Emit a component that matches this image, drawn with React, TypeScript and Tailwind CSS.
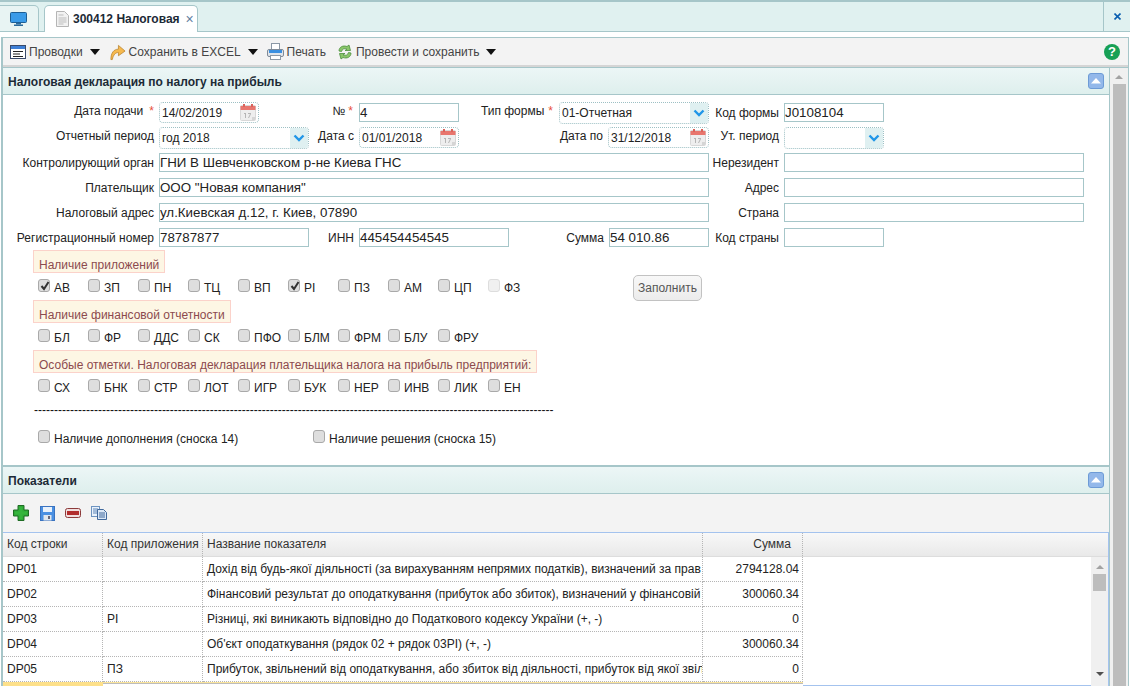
import React from "react";

const Chev = () => (
  <svg width="12" height="8" viewBox="0 0 12 8"><path d="M1.5 1.5 L6 6 L10.5 1.5" fill="none" stroke="#2196e8" strokeWidth="2.4" /></svg>
);

const Cal = () => (
  <svg width="16" height="17" viewBox="0 0 16 17">
    <rect x="0.5" y="1.5" width="15" height="15" rx="1" fill="#eeeeee" stroke="#d8d8d8" />
    <rect x="0.5" y="2" width="15" height="4" fill="#e8766e" />
    <rect x="3" y="0" width="2" height="3" fill="#d9645c" />
    <rect x="11" y="0" width="2" height="3" fill="#d9645c" />
    <path d="M4 9h2v5H5v-4H4zM8 9h3v1l-2 4H8l2-4H8z" fill="#b5b5b5" />
    <path d="M12 13h3v3h-3z" fill="#d5d5d5" />
  </svg>
);

const Label = ({ w, children, starCls, up, gap = 5 }: { w: number; children: React.ReactNode; starCls?: string; up?: boolean; gap?: number }) => (
  <div style={{ width: w + gap, paddingRight: gap }} className={`shrink-0 text-right whitespace-nowrap ${up ? "pb-[3px]" : ""}`}>
    {children}
    {starCls && <span className={`text-[#e8503a] ${starCls}`}>*</span>}
  </div>
);

const Input = ({ w, v }: { w: number; v?: string }) => (
  <div style={{ width: w }} className="h-[19px] shrink-0 border border-[#a6c6c9] text-[13.33px] leading-[17px] text-[#222] whitespace-nowrap overflow-hidden">{v}</div>
);

const DateF = ({ w, v }: { w: number; v: string }) => (
  <div style={{ width: w }} className="h-[21px] shrink-0 border border-dotted border-[#9dc0c4] rounded-[4px] pl-[2px] flex items-center justify-between text-[12px] text-[#222]">
    <span className="pt-[1px]">{v}</span>
    <span className="mr-[2px] flex"><Cal /></span>
  </div>
);

const SelectF = ({ w, v }: { w: number; v?: string }) => (
  <div style={{ width: w }} className="h-[22px] shrink-0 border border-dotted border-[#9dc0c4] rounded-[4px] pl-[2px] flex items-center justify-between text-[12px] text-[#222] overflow-hidden">
    <span className="pt-[1px]">{v}</span>
    <span className="w-[18px] h-full bg-[#dff0f1] flex items-center justify-center"><Chev /></span>
  </div>
);

const Row = ({ children }: { children: React.ReactNode }) => (
  <div className="flex items-center h-[25px] text-[12px] text-[#222]">{children}</div>
);

const Check = ({ checked, disabled, className = "" }: { checked?: boolean; disabled?: boolean; className?: string }) => (
  <span className={`block w-[12px] h-[13px] rounded-[3px] border shrink-0 relative ${disabled ? "border-[#dddddd] bg-[#f0f0f0]" : "border-[#a9a9a9] bg-[#dedede]"} ${className}`}>
    {checked && (
      <svg className="absolute left-[1px] top-[1px]" width="10" height="10" viewBox="0 0 10 10"><path d="M1.5 5 L4 8 L8.5 1" fill="none" stroke="#333" strokeWidth="2" /></svg>
    )}
  </span>
);

const CheckRow = ({ items }: { items: { t: string; c?: boolean; d?: boolean }[] }) => (
  <div className="flex h-[27px] pl-[35px] text-[12px] text-[#222]">
    {items.map((i) => (
      <div key={i.t} className="w-[50px] shrink-0 flex items-start pt-[6px] gap-[4px]">
        <Check checked={i.c} disabled={i.d} />
        <span className="pt-[2px] leading-[14px] whitespace-nowrap">{i.t}</span>
      </div>
    ))}
  </div>
);

const Title = ({ children }: { children: React.ReactNode }) => (
  <div className="ml-[30px] w-fit h-[23px] border border-[#fbd2ca] bg-[#fdf6e4] px-[5px] text-[12px] leading-[14px] pt-[7px] text-[#8c4a4e] whitespace-nowrap">{children}</div>
);

const Collapse = () => (
  <span className="w-[16px] h-[16px] rounded-[3px] border border-[#6d9bd6] bg-[#93b8ea] flex items-center justify-center">
    <svg width="10" height="6" viewBox="0 0 10 6"><path d="M5 0 L10 5.5 H0 Z" fill="#ffffff" /></svg>
  </span>
);

const PanelHead = ({ t }: { t: string }) => (
  <div className="h-[27px] shrink-0 flex items-center justify-between pl-[5px] pr-[5px] bg-gradient-to-b from-[#ecf6f6] to-[#deefed] border-b border-[#a6c6c9] text-[12px] font-bold text-[#1c2a36]">
    <span className="pt-[1px]">{t}</span>
    <Collapse />
  </div>
);

const Caret = () => (
  <svg className="ml-[4px]" width="10" height="6" viewBox="0 0 10 6"><path d="M0 0 H10 L5 6 Z" fill="#111" /></svg>
);

const ToolBtn = ({ icon, t, caret }: { icon: React.ReactNode; t: string; caret?: boolean }) => (
  <div className={`flex items-center h-full gap-[3px] ${caret ? "mr-[9px]" : "mr-[11px]"}`}>
    <span className="flex">{icon}</span>
    <span>{t}</span>
    {caret && <Caret />}
  </div>
);

const IcPost = () => (
  <svg width="16" height="16" viewBox="0 0 16 16">
    <rect x="0.5" y="1.5" width="15" height="13" fill="#fff" stroke="#3a4a6a" />
    <rect x="1" y="2" width="14" height="3" fill="#3f7fd6" />
    <path d="M3 7.5h10M3 10h7M3 12.5h10" stroke="#222" />
  </svg>
);
const IcExcel = () => (
  <svg width="17" height="18" viewBox="0 0 18 18">
    <path d="M2 17 C2 10 5 6 10 6 L10 2 L17 8 L10 13 L10 9.5 C7 9.5 4.5 12 3.5 17 Z" fill="#f6b94e" stroke="#b9822c" strokeWidth="0.8" />
  </svg>
);
const IcPrint = () => (
  <svg width="17" height="17" viewBox="0 0 17 17">
    <rect x="4.5" y="0.5" width="8" height="6" fill="#fff" stroke="#8b98a6" />
    <rect x="0.5" y="6.5" width="16" height="7" rx="1.5" fill="#dfe4ea" stroke="#7f8a97" />
    <rect x="2" y="7" width="13" height="3" fill="#3a8fe0" />
    <rect x="3.5" y="12.5" width="10" height="4" fill="#fff" stroke="#8b98a6" />
  </svg>
);
const IcPost2 = () => (
  <svg width="16" height="16" viewBox="0 0 16 16" fill="none">
    <path d="M2 7 C2 3 6 1 10 2.5 L12 1 L13.5 6.5 L8 6.5 L10 5 C7.5 4 5 5 4.5 7.5 Z" fill="#8ac66a" stroke="#4b8f3d" strokeWidth="0.8" />
    <path d="M14 9 C14 13 10 15 6 13.5 L4 15 L2.5 9.5 L8 9.5 L6 11 C8.5 12 11 11 11.5 8.5 Z" fill="#8ac66a" stroke="#4b8f3d" strokeWidth="0.8" />
  </svg>
);
const IcPlus = () => (
  <svg width="16" height="16" viewBox="0 0 16 16">
    <path d="M5 .5h6v4.500h4.500v6H11v4.500H5V11H.5V5H5z" fill="#2fa836" stroke="#1f6d24" strokeLinejoin="round" />
    <path d="M6.500 2h3v4.500H14v3H9.500V14h-3V9.500H2v-3h4.500z" fill="#35b53c" />
  </svg>
);
const IcSave = () => (
  <svg width="15" height="15" viewBox="0 0 15 15">
    <rect x="0.5" y="0.500" width="14" height="14" fill="#4a90e2" stroke="#3a73c0" />
    <rect x="3" y="1" width="9" height="5" fill="#e8f1fb" />
    <rect x="3.500" y="9" width="8" height="5.500" fill="#dfe6ee" />
    <rect x="8" y="10" width="2" height="3" fill="#667" />
  </svg>
);
const IcMinus = () => (
  <svg width="16" height="10" viewBox="0 0 16 10">
    <rect x="0.5" y="0.500" width="15" height="9" rx="2" fill="#f0dede" stroke="#8c3a3a" />
    <rect x="2" y="3" width="12" height="4" fill="#b22c2c" />
  </svg>
);
const IcCopy = () => (
  <svg width="16" height="14" viewBox="0 0 16 14">
    <rect x="0.5" y="0.500" width="8" height="10" fill="#eaf2fb" stroke="#6d93c0" />
    <path d="M2 3h5M2 5h5M2 7h5" stroke="#5a84b8" />
    <path d="M6.500 3.500h6l3 3v7h-9z" fill="#dbe8f7" stroke="#41699c" />
    <path d="M8 7h6M8 9h6M8 11h6" stroke="#41699c" />
  </svg>
);

const rows = [
  ["DP01", "", "Дохід від будь-якої діяльності (за вирахуванням непрямих податків), визначений за прав", "2794128.04"],
  ["DP02", "", "Фінансовий результат до оподаткування (прибуток або збиток), визначений у фінансовій", "300060.34"],
  ["DP03", "РІ", "Різниці, які виникають відповідно до Податкового кодексу України (+, -)", "0"],
  ["DP04", "", "Об'єкт оподаткування (рядок 02 + рядок 03РІ) (+, -)", "300060.34"],
  ["DP05", "ПЗ", "Прибуток, звільнений від оподаткування, або збиток від діяльності, прибуток від якої звіл", "0"],
];

export default function App() {
  return (
    <div className="w-[1130px] h-[686px] overflow-hidden bg-white flex flex-col font-['Liberation_Sans',Arial,sans-serif] text-[12px] text-[#222]">
      {/* tab bar */}
      <div className="h-[32px] shrink-0 border-t-2 border-b border-[#a6c6c9] bg-[#e0f1f0] flex items-end justify-between">
        <div className="flex items-end gap-[5px] mb-[-1px]">
          <div className="w-[39px] h-[27px] border border-l-0 border-[#a6c6c9] rounded-tr-[5px] bg-[#e8f4f3] flex items-center justify-center pr-[2px]">
            <svg width="17" height="14" viewBox="0 0 17 14">
              <rect x="0.500" y="0.500" width="16" height="10" rx="1" fill="#3a9be8" stroke="#1d5e94" />
              <rect x="6" y="11" width="5" height="1.500" fill="#2a6a9c" />
              <rect x="4" y="12.500" width="9" height="1.500" fill="#2a6a9c" />
            </svg>
          </div>
          <div className="w-[154px] h-[27px] border border-b-0 border-[#a6c6c9] rounded-t-[5px] bg-white flex items-center pl-[11px] gap-[4px] font-bold text-[#1c2a36]">
            <svg width="13" height="16" viewBox="0 0 13 16">
              <path d="M.5.500h8l4 4v11H.5z" fill="#f2f2f2" stroke="#b5b5b5" />
              <path d="M2.500 4h5M2.500 7h8M2.500 9h8M2.500 11h8M2.500 13h5" stroke="#bdbdbd" />
            </svg>
            <span>300412 Налоговая</span>
            <span className="ml-[2px] font-normal text-[#5f7f9f] text-[14px] leading-none">×</span>
          </div>
        </div>
        <div className="w-[27px] h-full border-l border-[#a6c6c9] flex items-center justify-center">
          <svg width="7" height="7" viewBox="0 0 7 7"><path d="M.5.500 L6.500 6.500 M6.500.500 L.5 6.500" stroke="#0b5fb0" strokeWidth="1.600" /></svg>
        </div>
      </div>
      <div className="h-[5px] shrink-0" />
      {/* frame */}
      <div className="flex-1 min-h-0 ml-[1px] mr-[1px] border-l-2 border-r border-t border-[#a6c6c9] flex flex-col">
        <div className="h-[29px] shrink-0 bg-[#f3f3f3] border-b-2 border-[#d5d5d5] flex items-center pl-[7px] pr-[8px] text-[#444]">
          <ToolBtn icon={<IcPost />} t="Проводки" caret />
          <ToolBtn icon={<IcExcel />} t="Сохранить в EXCEL" caret />
          <ToolBtn icon={<IcPrint />} t="Печать" />
          <ToolBtn icon={<IcPost2 />} t="Провести и сохранить" caret />
          <span className="ml-auto w-[16px] h-[16px] rounded-full bg-[#17a055] flex items-center justify-center text-white font-bold text-[13px] leading-none">?</span>
        </div>
        <div className="flex-1 min-h-0 flex border-t border-[#a6c6c9]">
          <div className="w-[1107px] shrink-0 border-r border-[#a6c6c9] flex flex-col min-h-0">
            <PanelHead t="Налоговая декларация по налогу на прибыль" />
            {/* form */}
            <div className="h-[372px] shrink-0 pt-[5px] border-b-2 border-[#a6c6c9]">
              <Row>
                <Label w={151} starCls="ml-[6px]" up>Дата подачи</Label>
                <DateF w={100} v="14/02/2019" />
                <Label w={95} starCls="ml-[3px] mr-[1px]" up>№</Label>
                <Input w={100} v="4" />
                <Label w={95} starCls="ml-[4px] mr-[1px]" up>Тип формы</Label>
                <SelectF w={150} v="01-Отчетная" />
                <Label w={70}>Код формы</Label>
                <Input w={100} v="J0108104" />
              </Row>
              <Row>
                <Label w={151} up>Отчетный период</Label>
                <SelectF w={150} v="год 2018" />
                <Label w={45} up>Дата с</Label>
                <DateF w={100} v="01/01/2018" />
                <Label w={144} up>Дата по</Label>
                <DateF w={101} v="31/12/2018" />
                <Label w={70} up>Ут. период</Label>
                <SelectF w={100} />
              </Row>
              <Row>
                <Label w={151}>Контролирующий орган</Label>
                <Input w={550} v="ГНИ В Шевченковском р-не Киева ГНС" />
                <Label w={70}>Нерезидент</Label>
                <Input w={300} />
              </Row>
              <Row>
                <Label w={151}>Плательщик</Label>
                <Input w={550} v={'ООО "Новая компания"'} />
                <Label w={70}>Адрес</Label>
                <Input w={300} />
              </Row>
              <Row>
                <Label w={151}>Налоговый адрес</Label>
                <Input w={550} v="ул.Киевская д.12, г. Киев, 07890" />
                <Label w={70}>Страна</Label>
                <Input w={300} />
              </Row>
              <Row>
                <Label w={151}>Регистрационный номер</Label>
                <Input w={150} v="78787877" />
                <Label w={45}>ИНН</Label>
                <Input w={150} v="445454454545" />
                <Label w={95}>Сумма</Label>
                <Input w={100} v="54 010.86" />
                <Label w={70}>Код страны</Label>
                <Input w={100} />
              </Row>
              <div>
                <Title>Наличие приложений</Title>
                <div className="flex h-[27px]">
                  <CheckRow items={[{ t: "АВ", c: true }, { t: "ЗП" }, { t: "ПН" }, { t: "ТЦ" }, { t: "ВП" }, { t: "РІ", c: true }, { t: "ПЗ" }, { t: "АМ" }, { t: "ЦП" }, { t: "ФЗ", d: true }]} />
                  <div className="ml-[95px] mt-[2px] w-[69px] h-[26px] rounded-[5px] border border-[#c2c2c2] bg-gradient-to-b from-[#f8f8f8] to-[#ececec] flex items-center justify-center text-[#555]">Заполнить</div>
                </div>
                <Title>Наличие финансовой отчетности</Title>
                <CheckRow items={[{ t: "БЛ" }, { t: "ФР" }, { t: "ДДС" }, { t: "СК" }, { t: "ПФО" }, { t: "БЛМ" }, { t: "ФРМ" }, { t: "БЛУ" }, { t: "ФРУ" }]} />
                <Title>Особые отметки. Налоговая декларация плательщика налога на прибыль предприятий:</Title>
                <CheckRow items={[{ t: "СХ" }, { t: "БНК" }, { t: "СТР" }, { t: "ЛОТ" }, { t: "ИГР" }, { t: "БУК" }, { t: "НЕР" }, { t: "ИНВ" }, { t: "ЛИК" }, { t: "ЕН" }]} />
                <div className="pl-[31px] mt-[3px] leading-[14px] whitespace-nowrap text-[#111]">{"-".repeat(130)}</div>
                <div className="flex pl-[35px] mt-[13px]">
                  <div className="w-[275px] flex items-start gap-[4px]">
                    <Check />
                    <span className="pt-[2px] leading-[14px]">Наличие дополнения (сноска 14)</span>
                  </div>
                  <div className="flex items-start gap-[4px]">
                    <Check />
                    <span className="pt-[2px] leading-[14px]">Наличие решения (сноска 15)</span>
                  </div>
                </div>
              </div>
            </div>
            <PanelHead t="Показатели" />
            <div className="h-[38px] shrink-0 bg-[#f3f3f3] flex items-center pl-[10px]">
              <span className="w-[27px] flex"><IcPlus /></span>
              <span className="w-[25px] flex"><IcSave /></span>
              <span className="w-[26px] flex"><IcMinus /></span>
              <span className="flex"><IcCopy /></span>
            </div>
            {/* grid */}
            <div className="flex-1 min-h-0 border-t border-r border-[#a4c3ee] flex flex-col">
              <div className="grid grid-cols-[100px_100px_500px_100px_1fr] h-[24px] shrink-0 bg-gradient-to-b from-[#f8f8f8] to-[#e9e9e9] border-b border-[#dddddd] leading-[23px] text-[#333]">
                <div className="pl-[4px] border-r border-dotted border-[#b5b5b5]">Код строки</div>
                <div className="pl-[4px] border-r border-dotted border-[#b5b5b5]">Код приложения</div>
                <div className="pl-[4px] border-r border-dotted border-[#b5b5b5]">Название показателя</div>
                <div className="pr-[11px] text-right border-r border-dotted border-[#b5b5b5]">Сумма</div>
                <div />
              </div>
              <div className="flex-1 min-h-0 flex overflow-hidden">
                <div className="flex-1 min-w-0 flex flex-col">
                  {rows.map((r) => (
                    <div key={r[0]} className="grid grid-cols-[100px_100px_500px_100px] h-[25px] shrink-0 leading-[24px]">
                      <div className="pl-[4px] border-r border-b border-dotted border-[#b5b5b5]">{r[0]}</div>
                      <div className="pl-[4px] border-r border-b border-dotted border-[#b5b5b5]">{r[1]}</div>
                      <div className="pl-[4px] border-r border-b border-dotted border-[#b5b5b5] whitespace-nowrap overflow-hidden">{r[2]}</div>
                      <div className="pr-[3px] text-right border-r border-b border-dotted border-[#b5b5b5]">{r[3]}</div>
                    </div>
                  ))}
                  <div className="grid grid-cols-[100px_100px_500px_100px_1fr] flex-1">
                    <div className="bg-[#fde08a]" />
                    <div className="border-t border-[#fbe49a] shadow-[inset_0_1px_0_#bdbdbd]" />
                    <div className="border-t border-[#fbe49a] shadow-[inset_0_1px_0_#bdbdbd]" />
                    <div className="border-t border-[#fbe49a] shadow-[inset_0_1px_0_#bdbdbd]" />
                    <div className="border-b border-[#a4c3ee]" />
                  </div>
                </div>
                <div className="w-[17px] shrink-0 bg-[#f0f0f0] flex flex-col items-center">
                  <svg className="mt-[8px]" width="8" height="4" viewBox="0 0 8 4"><path d="M4 0 L8 4 H0 Z" fill="#a3a3a3" /></svg>
                  <div className="mt-[5px] w-[13px] h-[17px] bg-[#bdbdbd]" />
                  <svg className="mt-[81px]" width="8" height="4" viewBox="0 0 8 4"><path d="M0 0 H8 L4 4 Z" fill="#505050" /></svg>
                </div>
              </div>
            </div>
          </div>
          {/* outer scrollbar */}
          <div className="flex-1 bg-[#f0f0f0] flex flex-col items-center">
            <svg className="mt-[7px] shrink-0" width="8" height="4" viewBox="0 0 8 4"><path d="M4 0 L8 4 H0 Z" fill="#a3a3a3" /></svg>
            <div className="mt-[5px] w-[13px] flex-1 bg-[#bdbdbd]" />
          </div>
        </div>
      </div>
    </div>
  );
}
